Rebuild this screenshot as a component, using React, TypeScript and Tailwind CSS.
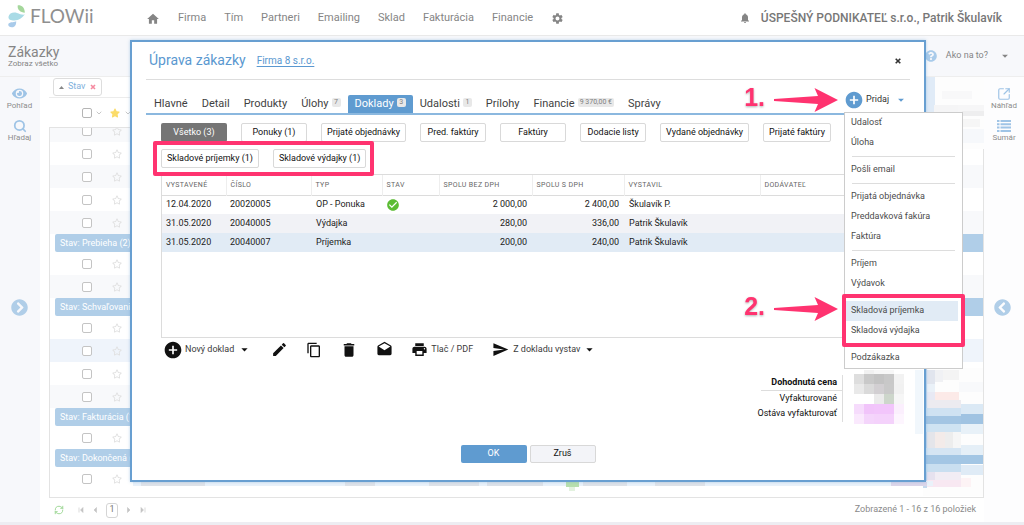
import React from "react";
import {
  MdAddCircle,
  MdArrowDropDown,
  MdCheckCircle,
  MdContentCopy,
  MdDelete,
  MdDrafts,
  MdEdit,
  MdHome,
  MdNotifications,
  MdPrint,
  MdSend,
  MdSettings,
} from "react-icons/md";
import { FaEye, FaStar, FaRegStar, FaQuestionCircle, FaChevronCircleLeft, FaChevronCircleRight } from "react-icons/fa";
import { ChevronDown, RefreshCw, Search, SquareArrowOutUpRight } from "lucide-react";

const NAV = ["Firma", "Tím", "Partneri", "Emailing", "Sklad", "Fakturácia", "Financie"];

type Tab = { label: string; badge?: string; active?: boolean };
const TABS: Tab[] = [
  { label: "Hlavné" },
  { label: "Detail" },
  { label: "Produkty" },
  { label: "Úlohy", badge: "7" },
  { label: "Doklady", badge: "3", active: true },
  { label: "Udalosti", badge: "1" },
  { label: "Prílohy" },
  { label: "Financie", badge: "9 370,00 €" },
  { label: "Správy" },
];

const FILTERS = [
  "Všetko (3)",
  "Ponuky (1)",
  "Prijaté objednávky",
  "Pred. faktúry",
  "Faktúry",
  "Dodacie listy",
  "Vydané objednávky",
  "Prijaté faktúry",
];
const STOCK_FILTERS = ["Skladové príjemky (1)", "Skladové výdajky (1)"];

const COLUMNS = ["Vystavené", "Číslo", "Typ", "Stav", "Spolu bez DPH", "Spolu s DPH", "Vystavil", "Dodávateľ"];
const DOCS = [
  { date: "12.04.2020", no: "20020005", type: "OP - Ponuka", ok: true, net: "2 000,00", gross: "2 400,00", by: "Škulavík P.", tone: "bg-white" },
  { date: "31.05.2020", no: "20040005", type: "Výdajka", ok: false, net: "280,00", gross: "336,00", by: "Patrik Škulavík", tone: "bg-[#f1f2f6]" },
  { date: "31.05.2020", no: "20040007", type: "Príjemka", ok: false, net: "200,00", gross: "240,00", by: "Patrik Škulavík", tone: "bg-[#e1ebf5]" },
];

const MENU = [
  ["Udalosť", "Úloha"],
  ["Pošli email"],
  ["Prijatá objednávka", "Preddavková fakúra", "Faktúra"],
  ["Príjem", "Výdavok"],
];

type Row = { group?: string; tone?: string };
const ROWS: Row[] = [
  { tone: "bg-white" },
  { tone: "bg-[#f8f9fb]" },
  { tone: "bg-white" },
  { tone: "bg-[#f8f9fb]" },
  { group: "Stav: Prebieha (2)" },
  { tone: "bg-white" },
  { tone: "bg-[#f8f9fb]" },
  { group: "Stav: Schvaľovanie (4)" },
  { tone: "bg-white" },
  { tone: "bg-[#eff4fb]" },
  { tone: "bg-white" },
  { tone: "bg-[#f8f9fb]" },
  { group: "Stav: Fakturácia (1)" },
  { tone: "bg-white" },
  { group: "Stav: Dokončená (1)" },
  { tone: "bg-white" },
];

type Cell = [number, number, number, number, string];

function Mosaic({ w, h, cells, className }: { w: number; h: number; cells: Cell[]; className: string }) {
  return (
    <svg width={w} height={h} viewBox={`0 0 ${w} ${h}`} className={className} shapeRendering="crispEdges" aria-hidden="true">
      {cells.map(([x, y, cw, ch, fill], i) => (
        <rect key={i} x={x} y={y} width={cw} height={ch} fill={fill} />
      ))}
    </svg>
  );
}

const TOTAL_CELLS: Cell[] = [
  [0, 4, 10, 10, "#dedede"], [10, 4, 10, 10, "#c9c9c9"], [20, 4, 10, 10, "#c3c3c3"], [30, 4, 10, 10, "#c8c8c8"], [40, 4, 10, 10, "#f2f2f2"],
  [0, 14, 10, 10, "#e9e9e9"], [10, 14, 10, 10, "#dadada"], [20, 14, 10, 10, "#d2cfd2"], [30, 14, 10, 10, "#c9c9c9"], [40, 14, 10, 10, "#f1f1f1"],
  [10, 0, 10, 4, "#f1f1f1"], [20, 0, 20, 4, "#f7f7f7"],
  [20, 24, 10, 10, "#ebebeb"], [30, 24, 10, 10, "#cdd6cb"], [40, 24, 10, 10, "#f6f6f6"],
  [0, 34, 10, 10, "#f6dcfc"], [10, 34, 10, 10, "#f1c4fa"], [20, 34, 20, 10, "#f2c5fb"], [40, 34, 10, 10, "#fbeffd"],
  [0, 44, 10, 10, "#fae9fd"], [10, 44, 10, 10, "#f4d5fb"], [20, 44, 20, 10, "#f4d2fb"], [40, 44, 10, 10, "#fdf5fe"],
  [61, 0, 8, 64, "#f1f7fc"],
];

const EDGE_CELLS: Cell[] = [
  [0, 0, 60, 128, "#fdfdfd"],
  [0, 0, 4, 120, "#c5d9ee"], [4, 2, 8, 14, "#e1e5ee"], [12, 2, 8, 12, "#f0f1f4"], [20, 2, 16, 10, "#f4f4f4"],
  [4, 16, 8, 10, "#eaf1f8"], [36, 14, 24, 10, "#f8f9fb"], [4, 24, 8, 8, "#e8e9f4"], [12, 24, 24, 8, "#fceae8"],
  [4, 32, 34, 8, "#ecebf0"],
  [0, 40, 38, 8, "#cfe2f2"], [38, 36, 22, 10, "#dbe9f5"], [0, 48, 60, 8, "#a3c5e3"], [38, 46, 22, 10, "#a0c3e2"],
  [0, 56, 38, 8, "#cfe3f2"], [38, 56, 22, 10, "#e8f1f8"],
  [4, 64, 8, 16, "#e4e5ea"], [12, 64, 10, 16, "#f3ebe9"], [22, 64, 8, 16, "#ededed"], [30, 64, 8, 16, "#f6f6f6"],
  [0, 80, 38, 8, "#d5e5f3"], [38, 77, 22, 10, "#e5eff7"], [0, 87, 60, 9, "#a3c6e4"],
  [0, 96, 38, 8, "#c9dff0"], [38, 97, 22, 10, "#dfebf6"],
  [4, 104, 8, 8, "#e6e2ef"], [12, 104, 26, 8, "#f1edf4"], [4, 112, 34, 7, "#f8e8f2"], [38, 110, 10, 9, "#fdf3f5"],
];

const TOP_CELLS: Cell[] = [
  [0, 0, 58, 72, "#fdfdfd"], [0, 0, 9, 72, "#e0ebf7"], [16, 14, 30, 8, "#f8f8f9"], [8, 28, 24, 7, "#f5f5f6"],
  [32, 28, 26, 7, "#f6f6f7"], [36, 34, 22, 5, "#eeeeef"], [36, 42, 18, 8, "#f6f6f6"], [36, 52, 22, 14, "#f6f8fb"],
];

function Logo() {
  return (
    <a href="#" className="flex items-center gap-1" aria-label="FLOWii">
      <svg width="18" height="24" viewBox="0 0 18 24" aria-hidden="true">
        <path d="M9.800 1.200C13.200 .8 16.800 3 16.800 8.800C12.600 8.400 8.800 5.600 9.800 1.200Z" fill="#a5d79c" />
        <path d="M.5 12.800C1 9 5.500 7.800 9 9C11.500 9.900 13.800 11 16.800 10.600C14.500 13.600 10.500 16.600 6.500 16.600C2.500 16.600 .2 15.500 .5 12.800Z" fill="#a9dbe6" />
        <path d="M8.200 17.200C8.300 20.500 7.300 23 4 23.200C1.300 23.300 -.2 21.600 .4 20C1.300 17.800 5 18.600 8.200 17.200Z" fill="#a9cbea" />
      </svg>
      <span className="font-['Lato'] text-[19px] leading-6 text-[#8f8f8f]">FLOWii</span>
    </a>
  );
}

function Arrow({ className }: { className: string }) {
  return (
    <svg width="68" height="28" viewBox="0 0 68 28" className={className} aria-hidden="true">
      <path
        d="M2 13L46 10L42.500 2L66 14L42.500 26L46 18L2 15Z"
        fill="#ff3370"
        stroke="#ffffff"
        strokeWidth="1"
        paintOrder="stroke"
      />
    </svg>
  );
}

function StepMark({ n, className }: { n: string; className: string }) {
  return (
    <div className={`pointer-events-none absolute flex items-center gap-[7px] ${className}`}>
      <span className="pb-[5px] font-['Liberation_Sans'] text-[25px] leading-7 font-bold text-[#ff3370] drop-shadow-[0_1px_1px_rgba(0,0,0,0.3)]">{n}</span>
      <Arrow className="shrink-0" />
    </div>
  );
}

function Badge({ children }: { children: React.ReactNode }) {
  return <span className="mb-1 min-w-[9px] rounded-xs bg-[#e8e8e8] px-[2px] text-center text-[7px] leading-[9px] text-[#808080]">{children}</span>;
}

function FilterButton({ label, active }: { label: string; active?: boolean }) {
  return (
    <button
      type="button"
      className={
        active
          ? "h-[19px] min-w-[66px] rounded-xs bg-[#757575] px-[6px] text-[9px] text-white"
          : "h-[19px] min-w-[66px] rounded-xs border border-[#d9d9d9] bg-white px-[5px] text-[9px] text-[#111111]"
      }
    >
      {label}
    </button>
  );
}

function MenuItem({ label, active }: { label: string; active?: boolean }) {
  return (
    <button
      type="button"
      role="menuitem"
      className={`block h-5 w-full px-[6px] text-left text-[9px] text-[#4b4b4b] ${active ? "bg-[#e1ebf5]" : ""}`}
    >
      {label}
    </button>
  );
}

function AddMenu() {
  return (
    <div role="menu" className="absolute top-[12px] -left-px z-20 w-[119px] border border-[#cccccc] bg-white">
      {MENU.map((group, i) => (
        <div key={i}>
          {group.map((label) => (
            <MenuItem key={label} label={label} />
          ))}
          <div className="mx-[7px] my-[3px] h-px bg-[#dddddd]" />
        </div>
      ))}
      <div className="relative pr-1">
        <MenuItem label="Skladová príjemka" active />
        <MenuItem label="Skladová výdajka" />
        <div className="pointer-events-none absolute -inset-x-[3px] -top-[7px] -bottom-[6px] rounded-xs border-4 border-[#ff3370]" />
      </div>
      <div className="pt-[7px]">
        <MenuItem label="Podzákazka" />
      </div>
    </div>
  );
}

function TopBar() {
  return (
    <header className="flex h-9 items-center border-b border-[#e9e9e9] bg-white pr-[22px] pl-2 text-[#858585]">
      <div className="w-[138px] pb-1">
        <Logo />
      </div>
      <nav className="flex flex-1 items-center gap-[18px] pt-[2px] text-[11px]">
        <a href="#" aria-label="Domov">
          <MdHome size={14} />
        </a>
        {NAV.map((n) => (
          <a key={n} href="#">
            {n}
          </a>
        ))}
        <a href="#" aria-label="Nastavenia">
          <MdSettings size={13} />
        </a>
      </nav>
      <MdNotifications size={12} />
      <span className="ml-[10px] text-[12px] font-medium text-[#777777]">ÚSPEŠNÝ PODNIKATEĽ s.r.o., Patrik Škulavík</span>
    </header>
  );
}

function SideButton({ label, children }: { label: string; children: React.ReactNode }) {
  return (
    <button type="button" className="flex flex-col items-center text-[8px] leading-[10px] text-[#8d8d8d]">
      <span className="flex h-[15px] items-center text-[#9fc4e6]">{children}</span>
      {label}
    </button>
  );
}

function OrdersGrid() {
  return (
    <main className="relative flex min-w-0 flex-1 flex-col bg-white pl-[9px]">
      <div className="flex h-[21px] items-center border-b border-[#ececec] pl-1">
        <button type="button" className="flex h-[18px] items-center gap-1 rounded-[3px] border border-[#dddddd] px-[5px] text-[9px] text-[#7fb1dc]">
          <svg width="5" height="3" viewBox="0 0 5 3" aria-hidden="true">
            <path d="M0 3L2.500 0L5 3Z" fill="#888" />
          </svg>
          Stav
          <svg width="6" height="6" viewBox="0 0 6 6" className="ml-px" aria-hidden="true">
            <path d="M1 1L5 5M5 1L1 5" stroke="#f58aa0" strokeWidth="1.600" />
          </svg>
        </button>
      </div>
      <div className="flex h-[29px] items-center pl-[33px] text-[#aaaaaa]">
        <input type="checkbox" aria-label="Vybrať všetko" className="size-[10px] appearance-none rounded-xs border border-[#b5b5b5] bg-white" />
        <ChevronDown size={8} className="ml-[3px]" />
        <FaStar size={10} className="ml-[7px] text-[#fbdc6a]" />
        <ChevronDown size={8} className="ml-1" />
      </div>
      <div className="border border-[#e3e3e3]">
        <div className="flex h-[14px] items-end overflow-hidden bg-[#f8f9fb]">
          <GridRow tone="bg-[#f8f9fb]" />
        </div>
        {ROWS.map((r, i) =>
          r.group ? (
            <div key={i} className="ml-[5px] h-[18px] rounded-l-xs bg-[#b0cee8] pl-[5px] text-[9px] leading-[18px] text-white">
              {r.group}
            </div>
          ) : (
            <GridRow key={i} tone={r.tone} />
          )
        )}
        <div className="h-[7px]" />
      </div>
      <footer className="flex h-6 items-center pl-[5px] text-[#bdbdbd]">
        <RefreshCw size={10} className="text-[#8fd186]" />
        <div className="ml-[14px] flex items-center gap-[7px]">
          <PageIcon d="M1 1.500V6.500M5 1.500L2.500 4L5 6.500Z" label="Prvá strana" />
          <PageIcon d="M4.500 1.500L2 4L4.500 6.500Z" label="Predošlá strana" />
          <span className="flex h-[15px] w-3 items-center justify-center rounded-[3px] border border-[#d5d5d5] text-[9px] text-[#777777]">1</span>
          <PageIcon d="M2.500 1.500L5 4L2.500 6.500Z" label="Ďalšia strana" />
          <PageIcon d="M6 1.500V6.500M2 1.500L4.500 4L2 6.500Z" label="Posledná strana" />
        </div>
        <span className="ml-auto pr-2 text-[9px] text-[#8a8a8a]">Zobrazené 1 - 16 z 16 položiek</span>
      </footer>
      <Mosaic w={58} h={72} cells={TOP_CELLS} className="absolute top-0 right-0" />
      <Mosaic w={60} h={128} cells={EDGE_CELLS} className="absolute top-[291px] right-px" />
      <Mosaic
        w={800}
        h={10}
        cells={[
          [0, 0, 800, 5, "#eaf2fa"], [8, 1, 64, 4, "#dfe3e9"], [212, 1, 30, 4, "#dfe3e9"], [296, 1, 50, 4, "#dfe3e9"],
          [354, 1, 56, 4, "#dde2e9"], [433, 0, 13, 6, "#b7dfae"], [436, 6, 6, 4, "#e3f2df"], [450, 1, 44, 4, "#dfe3e9"],
          [522, 1, 50, 4, "#dfe3e9"], [758, 1, 36, 4, "#dcd6ea"],
        ]}
        className="absolute top-[404px] left-[93px]"
      />
    </main>
  );
}

function PageIcon({ d, label }: { d: string; label: string }) {
  return (
    <button type="button" aria-label={label}>
      <svg width="7" height="8" viewBox="0 0 7 8" aria-hidden="true">
        <path d={d} fill="#c4c4c4" stroke="#c4c4c4" strokeWidth=".6" />
      </svg>
    </button>
  );
}

function GridRow({ tone }: { tone?: string }) {
  return (
    <div className={`flex h-[23px] w-full shrink-0 items-center pl-8 ${tone}`}>
      <input type="checkbox" aria-label="Vybrať zákazku" className="size-[10px] appearance-none rounded-xs border border-[#c4c4c4] bg-white" />
      <FaRegStar size={10} className="ml-5 text-[#e0e0e0]" />
    </div>
  );
}

function DocumentsTable() {
  return (
    <div className="h-[164px] overflow-hidden border border-[#dcdcdc]">
      <table className="w-full table-fixed border-collapse text-[9px] text-[#1c1c1c]">
        <colgroup>
          <col className="w-[64px]" />
          <col className="w-[85px]" />
          <col className="w-[71px]" />
          <col className="w-[57px]" />
          <col className="w-[93px]" />
          <col className="w-[92px]" />
          <col className="w-[136px]" />
          <col />
        </colgroup>
        <thead>
          <tr className="h-5 border-b border-[#dcdcdc]">
            {COLUMNS.map((c) => (
              <th key={c} className="border-r border-[#eeeeee] p-0 pl-1 text-left text-[7px] font-normal tracking-wider text-[#666666] uppercase">
                {c}
              </th>
            ))}
          </tr>
        </thead>
        <tbody>
          {DOCS.map((d) => (
            <tr key={d.no} className={`h-[19px] ${d.tone}`}>
              <td className="p-0 pl-1">{d.date}</td>
              <td className="p-0 pl-1">{d.no}</td>
              <td className="p-0 pl-[5px]">{d.type}</td>
              <td className="p-0 pl-1">{d.ok && <MdCheckCircle size={14} className="text-[#5cbc35]" aria-label="Schválené" />}</td>
              <td className="p-0 pr-[5px] text-right">{d.net}</td>
              <td className="p-0 pr-[5px] text-right">{d.gross}</td>
              <td className="p-0 pl-[5px]">{d.by}</td>
              <td className="p-0" />
            </tr>
          ))}
        </tbody>
      </table>
    </div>
  );
}

function Toolbar() {
  return (
    <div className="flex h-[23px] items-center pl-[2px] text-[9px] text-[#3c3c3c]">
      <button type="button" className="flex items-center">
        <MdAddCircle size={20} className="mr-[2px] text-[#111111]" />
        Nový doklad
        <MdArrowDropDown size={15} className="ml-[3px] text-[#111111]" />
      </button>
      <div className="ml-[19px] flex items-center gap-[18px] text-[#111111]">
        <button type="button" aria-label="Upraviť"><MdEdit size={17} /></button>
        <button type="button" aria-label="Kopírovať"><MdContentCopy size={16} /></button>
        <button type="button" aria-label="Vymazať"><MdDelete size={18} /></button>
        <button type="button" aria-label="Otvoriť email"><MdDrafts size={17} /></button>
      </div>
      <button type="button" className="ml-[18px] flex items-center gap-[3px]">
        <MdPrint size={17} className="text-[#111111]" />
        Tlač / PDF
      </button>
      <button type="button" className="ml-[19px] flex items-center">
        <MdSend size={17} className="mr-1 text-[#111111]" />
        Z dokladu vystav
        <MdArrowDropDown size={15} className="ml-[2px] text-[#111111]" />
      </button>
    </div>
  );
}

function OrderDialog() {
  return (
    <section
      role="dialog"
      aria-labelledby="dialog-title"
      className="pointer-events-auto relative w-full border-2 border-[#689fd1] bg-white px-[14px] pb-[17px] shadow-[0_0_3px_rgba(95,155,208,0.4)]"
    >
      <div className="flex h-[38px] items-center border-b border-[#dddddd]">
        <h2 id="dialog-title" className="pl-[3px] text-[14px] text-[#5a98d0]">
          Úprava zákazky
        </h2>
        <a href="#" className="ml-[11px] text-[10px] text-[#5a98d0] underline underline-offset-2">
          Firma 8 s.r.o.
        </a>
        <button type="button" aria-label="Zavrieť" className="mr-[9px] ml-auto">
          <svg width="6" height="6" viewBox="0 0 6 6" aria-hidden="true">
            <path d="M.7 .7L5.300 5.300M5.300 .7L.7 5.300" stroke="#333" strokeWidth="1.600" />
          </svg>
        </button>
      </div>

      <div className="flex h-[35px] items-end border-b-2 border-[#8bb8df]">
        <div role="tablist" className="flex flex-1 items-end pl-px">
          {TABS.map((t) => (
            <button
              key={t.label}
              type="button"
              role="tab"
              aria-selected={Boolean(t.active)}
              className={`flex h-[18px] items-center gap-[3px] px-[7px] text-[11px] ${
                t.active ? "rounded-t-xs bg-[#5f9bd0] text-white" : "text-[#3f3f3f]"
              }`}
            >
              {t.label}
              {t.badge && <Badge>{t.badge}</Badge>}
            </button>
          ))}
        </div>
        <div className="relative mb-[3px] w-[66px]">
          <button type="button" className="flex items-center text-[9px] text-[#333333]" aria-haspopup="menu">
            <MdAddCircle size={20} className="mr-[2px] text-[#5f9bd0]" />
            Pridaj
            <MdArrowDropDown size={14} className="ml-[5px] text-[#5f9bd0]" />
          </button>
          <div className="absolute top-[10px] left-px">
            <AddMenu />
          </div>
        </div>
      </div>

      <div className="pt-2 pl-[15px]">
        <div className="flex flex-wrap gap-[14px]">
          {FILTERS.map((f, i) => (
            <FilterButton key={f} label={f} active={i === 0} />
          ))}
        </div>
        <div className="relative mt-[7px] mb-[6px] flex w-fit gap-[14px]">
          {STOCK_FILTERS.map((f) => (
            <FilterButton key={f} label={f} />
          ))}
          <div className="pointer-events-none absolute -inset-x-[8px] -inset-y-[8px] z-10 rounded-xs border-4 border-[#ff3370]" />
        </div>
        <DocumentsTable />
        <Toolbar />
        <div className="mt-[14px] flex justify-end text-[9px] text-[#111111]">
          <dl className="w-[82px] border-r border-[#dddddd] pr-[5px] text-right leading-[15px] whitespace-nowrap">
            <dt className="-mr-[5px] border-b border-[#dddddd] pr-[5px] font-bold">Dohodnutá cena</dt>
            <dt>Vyfakturované</dt>
            <dt className="flex justify-end">Ostáva vyfakturovať</dt>
          </dl>
          <div className="w-[67px] pl-[11px]">
            <Mosaic w={69} h={64} cells={TOTAL_CELLS} className="-mt-[5px] -mb-3 block max-w-none" />
          </div>
        </div>
      </div>

      <div className="mt-[23px] flex justify-center gap-[3px]">
        <button type="button" className="h-[18px] w-[66px] rounded-xs bg-[#5f9bd0] text-[9px] text-white">
          OK
        </button>
        <button type="button" className="h-[18px] w-[66px] rounded-xs border border-[#d8d8d8] bg-[#f3f4f8] text-[9px] text-[#111111]">
          Zruš
        </button>
      </div>

      <StepMark n="1." className="top-[41px] right-[84px]" />
      <StepMark n="2." className="top-[250px] right-[84px]" />
    </section>
  );
}

export default function App() {
  return (
    <div className="relative flex min-h-screen flex-col bg-white font-['Roboto',sans-serif]">
      <TopBar />
      <div className="flex h-[41px] items-center border-b border-[#eeeeee] bg-[#f7f8fb] pr-3 pl-2 text-[#858585]">
        <div>
          <h1 className="text-[14px] leading-4">Zákazky</h1>
          <p className="text-[8px] leading-[8px]">Zobraz všetko</p>
        </div>
        <button type="button" className="ml-auto flex items-center text-[9px]">
          <FaQuestionCircle size={12} className="mr-[9px] text-[#a9cbea]" />
          Ako na to?
          <MdArrowDropDown size={14} className="ml-[10px]" />
        </button>
      </div>
      <div className="flex flex-1">
        <aside className="flex w-10 flex-col items-center gap-[7px] bg-[#f7f8fb] pt-[9px] pr-px">
          <SideButton label="Pohľad">
            <FaEye size={15} />
          </SideButton>
          <SideButton label="Hľadaj">
            <Search size={14} strokeWidth={3} />
          </SideButton>
          <button type="button" aria-label="Rozbaliť ľavý panel" className="mt-[149px] text-[#b0cee8]">
            <FaChevronCircleRight size={17} />
          </button>
        </aside>
        <OrdersGrid />
        <aside className="flex w-10 flex-col items-center gap-[7px] bg-[#fdfdfe] pt-[9px]">
          <SideButton label="Náhľad">
            <SquareArrowOutUpRight size={14} />
          </SideButton>
          <SideButton label="Sumár">
            <svg width="14" height="12" viewBox="0 0 14 12" fill="currentColor" aria-hidden="true">
              <path d="M0 0h2.500v2H0zM3.500 0H14v2H3.500zM0 3.300h2.500v2H0zM3.500 3.300H14v2H3.500zM0 6.600h2.500v2H0zM3.500 6.600H14v2H3.500zM0 9.900h2.500v2H0zM3.500 9.900H14v2H3.500z" />
            </svg>
          </SideButton>
          <button type="button" aria-label="Rozbaliť pravý panel" className="mt-[149px] pr-1 text-[#b0cee8]">
            <FaChevronCircleLeft size={17} />
          </button>
        </aside>
      </div>
      <div className="h-[3px] bg-[#ededf2]" />
      <div className="pointer-events-none absolute inset-0 flex items-start pt-10 pr-[98px] pl-[130px]">
        <OrderDialog />
      </div>
    </div>
  );
}
